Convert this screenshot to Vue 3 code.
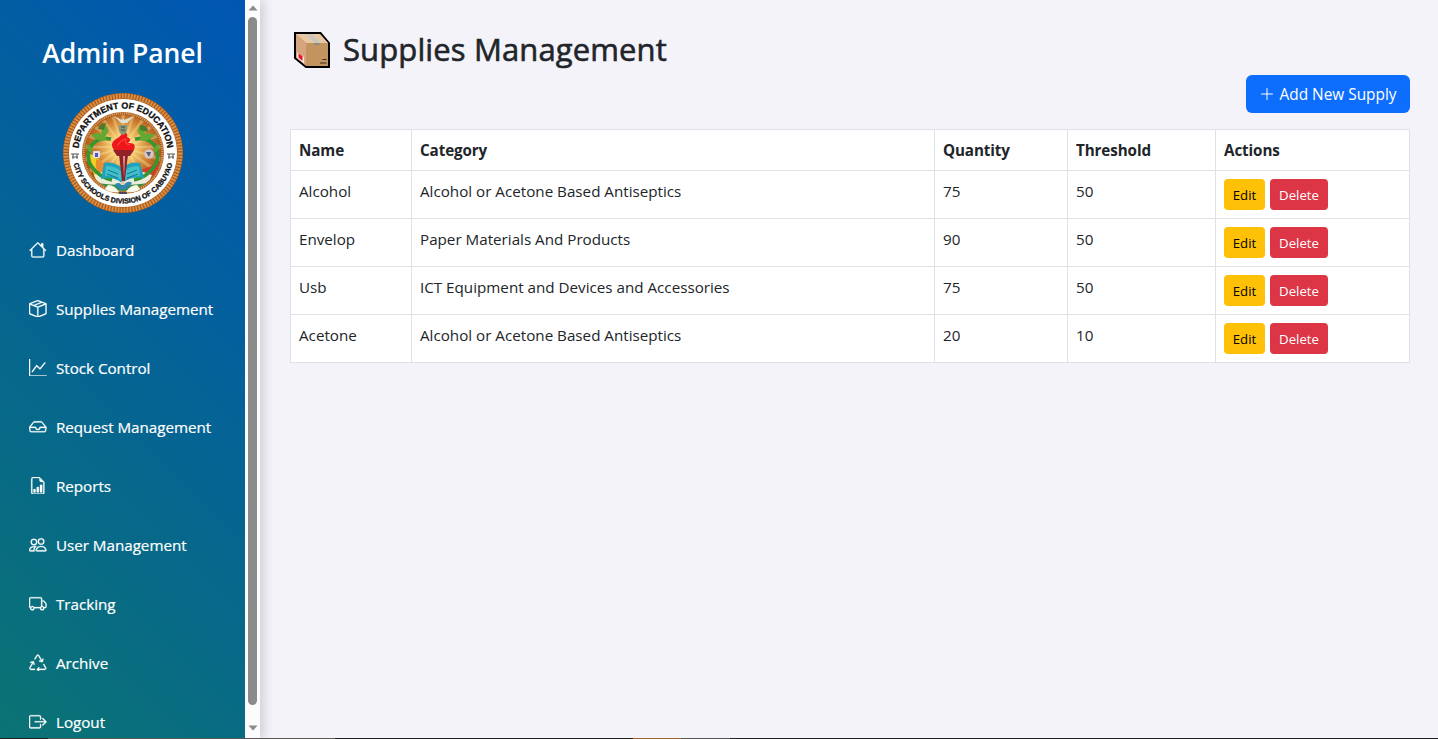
<script setup>
const menu = [
  { label: 'Dashboard', d: ['M8.707 1.5a1 1 0 0 0-1.414 0L.646 8.146a.5.5 0 0 0 .708.708L2 8.207V13.5A1.5 1.5 0 0 0 3.5 15h9a1.5 1.5 0 0 0 1.5-1.5V8.207l.646.647a.5.5 0 0 0 .708-.708L13 5.793V2.5a.5.5 0 0 0-.5-.5h-1a.5.5 0 0 0-.5.5v1.293zM13 7.207V13.5a.5.5 0 0 1-.5.5h-9a.5.5 0 0 1-.5-.5V7.207l5-5z'] },
  { label: 'Supplies Management', d: ['M8.186 1.113a.5.5 0 0 0-.372 0L1.846 3.5l2.404.961L10.404 2zm3.564 1.426L5.596 5 8 5.961 14.154 3.5zm3.25 1.7-6.5 2.6v7.922l6.5-2.6V4.24zM7.5 14.762V6.838L1 4.239v7.923zM7.443.184a1.5 1.5 0 0 1 1.114 0l7.129 2.852A.5.5 0 0 1 16 3.5v8.662a1 1 0 0 1-.629.928l-7.185 2.874a.5.5 0 0 1-.372 0L.63 13.09a1 1 0 0 1-.63-.928V3.5a.5.5 0 0 1 .314-.464z'] },
  { label: 'Stock Control', d: ['M0 0h1v15h15v1H0zm14.817 3.113a.5.5 0 0 1 .07.704l-4.5 5.5a.5.5 0 0 1-.74.037L7.06 6.767l-3.656 5.027a.5.5 0 0 1-.808-.588l4-5.5a.5.5 0 0 1 .758-.06l2.609 2.61 4.15-5.073a.5.5 0 0 1 .704-.07'] },
  { label: 'Request Management', d: ['M4.98 4a.5.5 0 0 0-.39.188L1.54 8H6a.5.5 0 0 1 .5.5 1.5 1.5 0 1 0 3 0A.5.5 0 0 1 10 8h4.46l-3.05-3.812A.5.5 0 0 0 11.02 4zm9.954 5H10.45a2.5 2.5 0 0 1-4.9 0H1.066l.32 2.562a.5.5 0 0 0 .497.438h12.234a.5.5 0 0 0 .496-.438zM3.809 3.563A1.5 1.5 0 0 1 4.981 3h6.038a1.5 1.5 0 0 1 1.172.563l3.7 4.625a.5.5 0 0 1 .105.374l-.39 3.124A1.5 1.5 0 0 1 14.117 13H1.883a1.5 1.5 0 0 1-1.489-1.314l-.39-3.124a.5.5 0 0 1 .106-.374z'] },
  { label: 'Reports', d: ['M10 13.5a.5.5 0 0 0 .5.5h1a.5.5 0 0 0 .5-.5v-6a.5.5 0 0 0-.5-.5h-1a.5.5 0 0 0-.5.5zm-2.5.5a.5.5 0 0 1-.5-.5v-4a.5.5 0 0 1 .5-.5h1a.5.5 0 0 1 .5.5v4a.5.5 0 0 1-.5.5zm-3 0a.5.5 0 0 1-.5-.5v-2a.5.5 0 0 1 .5-.5h1a.5.5 0 0 1 .5.5v2a.5.5 0 0 1-.5.5z', 'M14 14V4.5L9.5 0H4a2 2 0 0 0-2 2v12a2 2 0 0 0 2 2h8a2 2 0 0 0 2-2M9.5 3A1.5 1.5 0 0 0 11 4.5h2V14a1 1 0 0 1-1 1H4a1 1 0 0 1-1-1V2a1 1 0 0 1 1-1h5.5z'] },
  { label: 'User Management', d: ['M15 14s1 0 1-1-1-4-5-4-5 3-5 4 1 1 1 1zm-7.978-1L7 12.996c.001-.264.167-1.03.76-1.72C8.312 10.629 9.282 10 11 10c1.717 0 2.687.63 3.24 1.276.593.69.758 1.457.76 1.72l-.008.002-.014.002zM11 7a2 2 0 1 0 0-4 2 2 0 0 0 0 4m3-2a3 3 0 1 1-6 0 3 3 0 0 1 6 0M6.936 9.28a6 6 0 0 0-1.23-.247A7 7 0 0 0 5 9c-4 0-5 3-5 4q0 1 1 1h4.216A2.24 2.24 0 0 1 5 13c0-1.01.377-2.042 1.09-2.904.243-.294.526-.569.846-.816M4.92 10A5.5 5.5 0 0 0 4 13H1c0-.26.164-1.03.76-1.724.545-.636 1.492-1.256 3.16-1.275ZM1.5 5.5a3 3 0 1 1 6 0 3 3 0 0 1-6 0m3-2a2 2 0 1 0 0 4 2 2 0 0 0 0-4'] },
  { label: 'Tracking', d: ['M0 3.5A1.5 1.5 0 0 1 1.5 2h9A1.5 1.5 0 0 1 12 3.5V5h1.02a1.5 1.5 0 0 1 1.17.563l1.481 1.85a1.5 1.5 0 0 1 .329.938V10.5a1.5 1.5 0 0 1-1.5 1.5H14a2 2 0 1 1-4 0H5a2 2 0 1 1-3.998-.085A1.5 1.5 0 0 1 0 10.5zm1.294 7.456A2 2 0 0 1 4.732 11h5.536a2 2 0 0 1 .732-.732V3.5a.5.5 0 0 0-.5-.5h-9a.5.5 0 0 0-.5.5v7a.5.5 0 0 0 .294.456M12 10a2 2 0 0 1 1.732 1h.768a.5.5 0 0 0 .5-.5V8.35a.5.5 0 0 0-.11-.312l-1.48-1.85A.5.5 0 0 0 13.02 6H12zm-9 1a1 1 0 1 0 0 2 1 1 0 0 0 0-2m9 0a1 1 0 1 0 0 2 1 1 0 0 0 0-2'] },
  { label: 'Archive', d: ['M9.302 1.256a1.5 1.5 0 0 0-2.604 0l-1.704 2.98a.5.5 0 0 0 .869.497l1.703-2.981a.5.5 0 0 1 .868 0l2.54 4.444-1.256-.337a.5.5 0 1 0-.26.966l2.415.647a.5.5 0 0 0 .613-.353l.647-2.415a.5.5 0 1 0-.966-.259l-.333 1.242zM2.973 7.773l-1.255.337a.5.5 0 1 1-.26-.966l2.416-.647a.5.5 0 0 1 .612.353l.647 2.415a.5.5 0 0 1-.966.259l-.333-1.242-2.545 4.454a.5.5 0 0 0 .434.748H5a.5.5 0 0 1 0 1H1.723A1.5 1.5 0 0 1 .421 12.24zm10.89 1.463a.5.5 0 1 0-.868.496l1.716 3.004a.5.5 0 0 1-.434.748h-5.57l.647-.646a.5.5 0 1 0-.708-.707l-1.5 1.5a.5.5 0 0 0 0 .707l1.5 1.5a.5.5 0 1 0 .708-.707l-.647-.647h5.57a1.5 1.5 0 0 0 1.302-2.244z'] },
  { label: 'Logout', d: ['M10 12.5a.5.5 0 0 1-.5.5h-8a.5.5 0 0 1-.5-.5v-9a.5.5 0 0 1 .5-.5h8a.5.5 0 0 1 .5.5v2a.5.5 0 0 0 1 0v-2A1.5 1.5 0 0 0 9.5 2h-8A1.5 1.5 0 0 0 0 3.5v9A1.5 1.5 0 0 0 1.5 14h8a1.5 1.5 0 0 0 1.5-1.5v-2a.5.5 0 0 0-1 0z', 'M15.854 8.354a.5.5 0 0 0 0-.708l-3-3a.5.5 0 0 0-.708.708L14.293 7.5H5.5a.5.5 0 0 0 0 1h8.793l-2.147 2.146a.5.5 0 0 0 .708.708z'] },
]
const supplies = [
  { name: 'Alcohol', category: 'Alcohol or Acetone Based Antiseptics', quantity: 75, threshold: 50 },
  { name: 'Envelop', category: 'Paper Materials And Products', quantity: 90, threshold: 50 },
  { name: 'Usb', category: 'ICT Equipment and Devices and Accessories', quantity: 75, threshold: 50 },
  { name: 'Acetone', category: 'Alcohol or Acetone Based Antiseptics', quantity: 20, threshold: 10 },
]
const rays = Array.from({ length: 20 }, (_, i) => i * 18)
</script>

<template>
  <div class="page">
    <aside class="sidebar">
      <div class="side-content">
        <h3 class="brand">Admin Panel</h3>
        <svg class="seal" viewBox="0 0 120 120">
          <defs>
            <radialGradient id="glow" cx="50%" cy="42%" r="58%">
              <stop offset="0" stop-color="#fffbe0" />
              <stop offset=".3" stop-color="#f3c66a" />
              <stop offset=".65" stop-color="#c8772a" />
              <stop offset="1" stop-color="#9c4715" />
            </radialGradient>
            <path id="arcTop" d="M15.5 60a44.5 44.5 0 0 1 89 0" />
            <path id="arcBottom" d="M9.5 60a50.5 50.5 0 0 0 101 0" />
            <clipPath id="inner"><circle cx="60" cy="60" r="38" /></clipPath>
          </defs>
          <circle cx="60" cy="60" r="60" fill="#a65a1e" />
          <circle cx="60" cy="60" r="57" fill="none" stroke="#dc9044" stroke-width="5" stroke-dasharray="1.8 1.2" />
          <circle cx="60" cy="60" r="54" fill="#fff" />
          <circle cx="60" cy="60" r="41" fill="#a85d22" />
          <circle cx="60" cy="60" r="39.5" fill="none" stroke="#dfa05c" stroke-width="2" stroke-dasharray="1.2 .9" />
          <g clip-path="url(#inner)">
            <circle cx="60" cy="60" r="38" fill="url(#glow)" />
            <path v-for="a in rays" :key="a" d="M60 54L57.5 8h5z" fill="#fff3b8" opacity=".32" :transform="`rotate(${a} 60 54)`" />
            <path d="M24 60q12 2 18 16l6 16-15-4z" fill="#f3cf25" />
            <path d="M33 66q10 3 16 20l-8 2q-10-8-8-22z" fill="#e98b2f" />
            <path d="M76 78l20-8-3 18-16 8z" fill="#d33c2c" />
            <path d="M31 82q29-12 58 0l-8 18H40z" fill="#e9eedc" />
            <path d="M34 90q26 4 52 0L73 101H47z" fill="#358c3d" />
          </g>
          <path d="M48 46C28 42 20 62 29 74q7 10 20 13M72 46c20-4 28 16 19 28q-7 10-20 13" fill="none" stroke="#34962f" stroke-width="3.6" />
          <path d="M44 47q-9 3-16-5 11-5 16 5M39 45q-3-9 5-12 4 8-5 12M76 47q9 3 16-5-11-5-16 5M81 45q3-9-5-12-4 8 5 12M29 60q-7-3-5-9 7 3 5 9M91 60q7-3 5-9-7 3-5 9" fill="#62a832" />
          <path d="M35 36q2-6 8-6l-2 7zM77 32q8 0 8 7l-8-2z" fill="#4b7c2b" />
          <path d="M41 70q9-2 18 5 9-7 18-5l4 15q-12-2-22 5-9-7-21-4z" fill="#1fa3bd" />
          <path d="M43 73q9 0 15 5v9q-8-5-16-4zM76 73q-9 0-15 5v9q8-5 16-4z" fill="#41bfcb" />
          <path d="M45 77l10 4M44 81l11 4M74 77l-10 4M75 81l-11 4" stroke="#15758e" stroke-width="1" />
          <path d="M56 62h9l-3.200 26h-2.600z" fill="#8e2027" />
          <path d="M60 63h2l-1 22z" fill="#dca0a0" />
          <path d="M50 57h21l-4 6H54z" fill="#942028" />
          <path d="M51 57q-5-7 2-11 8-4 5-9 8 3 6 7 6 2 1 6 9-1 6 7z" fill="#ef171c" />
          <path d="M54 53q4-6 9-7-2 5 4 6" fill="none" stroke="#ff4538" stroke-width="1.2" />
          <path d="M51 23l8 4 1-2 1 2 10-4-7 7h-6z" fill="#dde1d1" />
          <path d="M56 32h8v5q-1 4-4 5-3-1-4-5z" fill="#83987d" />
          <path d="M58 34h4M58 37h4" stroke="#3e513e" stroke-width="1" />
          <rect x="30" y="58" width="7" height="7" rx="1" fill="#dce0f3" /><rect x="32" y="60" width="3" height="4" fill="#5656b8" />
          <circle cx="86" cy="61" r="4.8" fill="#d3c6c5" /><path d="M83 59h5l-2 5z" fill="#605977" />
          <path d="M52 91q6-3 7 3 6-8 10-4-5 6-9 7-5 0-8-6" fill="#2e86ba" /><circle cx="60" cy="90" r="2" fill="#efcba0" />
          <path d="M45 92q7 0 11 7-10 1-14-3M74 92q-7 0-11 7 10 1 14-3" fill="#f7f8e8" />
          <path d="M56 100h8" stroke="#27345d" stroke-width="1.5" />
          <path d="M8 61h8M9 64h6M10 61v5M14 61v5M104 61h8M105 64h6M106 61v5M110 61v5" stroke="#555" stroke-width="1" />
          <text class="seal-text top"><textPath href="#arcTop" startOffset="50%" text-anchor="middle">DEPARTMENT OF EDUCATION</textPath></text>
          <text class="seal-text bottom"><textPath href="#arcBottom" startOffset="50%" text-anchor="middle">CITY SCHOOLS DIVISION OF CABUYAO</textPath></text>
        </svg>
        <nav class="menu">
          <a v-for="item in menu" :key="item.label" class="menu-item">
            <svg class="icon" viewBox="0 0 16 16"><path v-for="p in item.d" :key="p" :d="p" /></svg>
            <span>{{ item.label }}</span>
          </a>
        </nav>
      </div>
      <div class="scrollbar">
        <svg class="arrow" viewBox="0 0 10 6"><path d="M5 .5L9.5 5.5H.5z" /></svg>
        <div class="thumb"></div>
        <svg class="arrow" viewBox="0 0 10 6"><path d="M5 5.5L9.5 .5H.5z" /></svg>
      </div>
    </aside>

    <main class="main">
      <h2 class="title">
        <svg class="parcel" viewBox="0 0 38 38">
          <path d="M2 3h25.500L36 13v24H13L2 28z" fill="#c19565" stroke="#000" stroke-width="2" />
          <path d="M3 4h24l8 9H13z" fill="#e8c7a5" />
          <path d="M3 4l10 9v22.500L3 27.500z" fill="#d5a67d" />
          <path d="M13 13h22v23H13z" fill="#c29460" />
          <path d="M13 4h6l8 9h-5.500z" fill="#c9c6bd" />
          <path d="M21.500 13h5v2h-5z" fill="#8d8b84" />
          <path d="M4 22.500l7 4.500v6.500L4 27.500z" fill="#f5e7e4" />
          <path d="M5.500 23.500l4 2.800v4.400l-4-3.300z" fill="#e81123" />
          <path d="M29.500 29.500h4M27 33h6.500" stroke="#3a2a1a" stroke-width="1.200" />
        </svg>
        <span>Supplies Management</span>
      </h2>
      <div class="toolbar">
        <button class="btn add">
          <svg class="plus" viewBox="0 0 16 16"><path d="M8 2a.5.5 0 0 1 .5.5v5h5a.5.5 0 0 1 0 1h-5v5a.5.5 0 0 1-1 0v-5h-5a.5.5 0 0 1 0-1h5v-5A.5.5 0 0 1 8 2" /></svg>
          <span>Add New Supply</span>
        </button>
      </div>
      <table class="table">
        <colgroup><col class="c1" /><col class="c2" /><col class="c3" /><col class="c4" /><col class="c5" /></colgroup>
        <thead>
          <tr><th>Name</th><th>Category</th><th>Quantity</th><th>Threshold</th><th>Actions</th></tr>
        </thead>
        <tbody>
          <tr v-for="s in supplies" :key="s.name">
            <td>{{ s.name }}</td><td>{{ s.category }}</td><td>{{ s.quantity }}</td><td>{{ s.threshold }}</td>
            <td><div class="actions"><button class="btn small edit">Edit</button><button class="btn small delete">Delete</button></div></td>
          </tr>
        </tbody>
      </table>
    </main>
    <div class="edge"></div>
  </div>
</template>

<style>
body { margin: 0; background: #f4f3fa; }
</style>

<style scoped>
* { box-sizing: border-box; }
.page {
  position: relative; display: flex; width: 1438px; height: 739px; overflow: hidden;
  background: #f4f3fa; color: #212529;
  font-family: "Open Sans", "Noto Sans", sans-serif; font-size: 15.2px; line-height: 24px; letter-spacing: 0;
}
.sidebar { display: flex; width: 260px; height: 739px; flex: none; box-shadow: 4px 0 10px rgba(0, 0, 0, .15); }
.side-content {
  width: 245px; height: 739px; overflow: hidden; display: flex; flex-direction: column; align-items: center;
  background: linear-gradient(45deg, #0b7373, #0056b3); color: #fff;
}
.brand { margin: 36px 0 0; font-size: 26.500px; line-height: 34px; font-weight: 600; letter-spacing: -0.1px; white-space: nowrap; }
.seal { width: 120px; height: 120px; margin-top: 23px; flex: none; }
.seal-text { font-family: "Liberation Sans", Arial, sans-serif; font-weight: 700; fill: #111; stroke: #111; stroke-width: .3px; }
.top { font-size: 8.900px; letter-spacing: 0; }
.bottom { font-size: 7.200px; }
.menu { align-self: stretch; margin-top: 7px; }
.menu-item { height: 59px; display: flex; align-items: center; gap: 9.400px; padding-left: 29px; letter-spacing: -0.02px; -webkit-text-stroke: .2px currentColor; white-space: nowrap; }
.icon { width: 17.600px; height: 17.600px; fill: currentColor; stroke: currentColor; stroke-width: .25px; flex: none; }
.scrollbar { width: 15px; height: 739px; background: #fcfcfc; display: flex; flex-direction: column; align-items: center; padding-top: 5px; }
.arrow { width: 10px; height: 6px; fill: #8b8b8b; flex: none; }
.thumb { width: 9px; height: 688px; margin: 6px 0 20px; border-radius: 5px; background: #8b8b8b; flex: none; }
.main { flex: 1; padding: 30px 28px 0 30px; }
.title { display: flex; align-items: center; gap: 12px; margin: 0; padding-left: 3px; height: 38px; font-size: 31px; line-height: 38px; font-weight: 400; letter-spacing: .12px; -webkit-text-stroke: .6px currentColor; white-space: nowrap; }
.parcel { width: 38px; height: 38px; flex: none; }
.toolbar { display: flex; justify-content: flex-end; margin: 7px 0 16px; }
.btn { border: 0; margin: 0; font-family: inherit; white-space: nowrap; letter-spacing: inherit; display: flex; align-items: center; justify-content: center; }
.add { width: 164px; height: 38px; gap: 4px; border-radius: 6px; background: #0d6efd; color: #fff; font-size: 15.400px; padding: 0; }
.plus { width: 16px; height: 16px; fill: currentColor; }
.table { width: 1120px; table-layout: fixed; border-collapse: collapse; background: #fff; }
.c1 { width: 121px; } .c2 { width: 523px; } .c3 { width: 133px; } .c4 { width: 148px; } .c5 { width: 194px; }
.table th, .table td { border: 1px solid #dee2e6; padding: 8px; text-align: left; vertical-align: top; white-space: nowrap; }
.table th { height: 41px; font-weight: 700; letter-spacing: -0.1px; }
.table td { height: 48px; }
.actions { display: flex; gap: 5px; height: 31px; }
.small { height: 31px; border-radius: 4px; font-size: 13.200px; padding: 0; }
.edit { width: 41px; background: #ffc107; color: #000; }
.delete { width: 58px; background: #dc3545; color: #fff; }
.edge { position: absolute; left: 0; bottom: 0; width: 1438px; height: 1px; background: linear-gradient(90deg, #222 0 48px, #5a5854 48px 335px, #222 335px 633px, #a8662f 633px 681px, #555 681px 730px, #222 730px); }
</style>
